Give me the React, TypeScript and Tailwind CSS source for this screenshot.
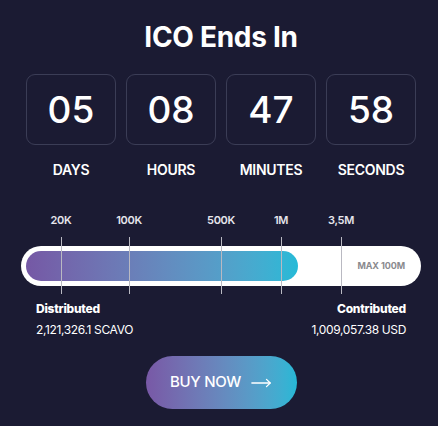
import React from 'react';
import { MoveRight } from 'lucide-react';

const countdown = [
    { value: '05', label: 'DAYS' },
    { value: '08', label: 'HOURS' },
    { value: '47', label: 'MINUTES' },
    { value: '58', label: 'SECONDS' },
];

// x offsets inside the 400px progress track
const milestones = [
    { label: '20K', x: 40 },
    { label: '100K', x: 108 },
    { label: '500K', x: 200 },
    { label: '1M', x: 260 },
    { label: '3,5M', x: 320 },
];

const App: React.FC = () => {
    return (
        <div
            className="w-[438px] h-[426px] pl-[4px] bg-[#1b1b33] text-white flex flex-col items-center overflow-hidden"
            style={{ fontFamily: 'Inter, "Noto Sans", sans-serif' }}
        >
            <h1 className="mt-[23px] text-[28px] leading-none font-bold tracking-[-0.01em]">ICO Ends In</h1>

            {/* Countdown */}
            <div className="mt-[23px] grid grid-cols-4 gap-[10px] w-[390px]">
                {countdown.map(item => (
                    <div
                        key={item.label}
                        className="h-[71px] rounded-[9px] border border-[#3b3d56] flex items-center justify-center text-[37px] leading-none font-medium"
                    >
                        {item.value}
                    </div>
                ))}
            </div>
            <div className="mt-[18px] grid grid-cols-4 gap-[10px] w-[390px]">
                {countdown.map(item => (
                    <div key={item.label} className="text-center text-[14px] leading-none font-semibold tracking-[-0.02em]">
                        {item.label}
                    </div>
                ))}
            </div>

            {/* Progress */}
            <div className="relative mt-[38px] w-[400px] h-[79px]">
                <div className="absolute left-0 right-0 top-[31px] h-[40px] rounded-full bg-white p-[5px] flex items-center">
                    <div className="h-[30px] w-[272px] rounded-full bg-gradient-to-r from-[#7558a5] to-[#24bad7]" />
                    <span className="ml-auto mr-[11px] text-[9px] font-bold text-[#8a8a8e] tracking-[-0.01em]">MAX 100M</span>
                </div>
                {milestones.map(m => (
                    <React.Fragment key={m.label}>
                        <span
                            className="absolute top-0 -translate-x-1/2 text-[11px] leading-none font-semibold tracking-[-0.03em] text-[#e6e6ec]"
                            style={{ left: m.x }}
                        >
                            {m.label}
                        </span>
                        <div
                            className="absolute top-[22px] h-[57px] w-px bg-[#b9b9c2]"
                            style={{ left: m.x }}
                        />
                    </React.Fragment>
                ))}
            </div>

            {/* Totals */}
            <div className="mt-[9px] w-[370px] flex justify-between text-[12px] leading-none">
                <div>
                    <div className="font-extrabold tracking-[-0.02em]">Distributed</div>
                    <div className="mt-[9px] tracking-[-0.03em]">2,121,326.1 SCAVO</div>
                </div>
                <div className="text-right">
                    <div className="font-extrabold tracking-[-0.02em]">Contributed</div>
                    <div className="mt-[9px] tracking-[-0.03em]">1,009,057.38 USD</div>
                </div>
            </div>

            <button className="mt-[20px] w-[151px] h-[53px] rounded-full bg-gradient-to-r from-[#7858a6] to-[#25b8d6] flex items-center justify-center gap-[9px] text-[15px] font-medium tracking-[-0.02em]">
                BUY NOW
                <MoveRight size={22} strokeWidth={1.4} />
            </button>
        </div>
    );
};

export default App;
